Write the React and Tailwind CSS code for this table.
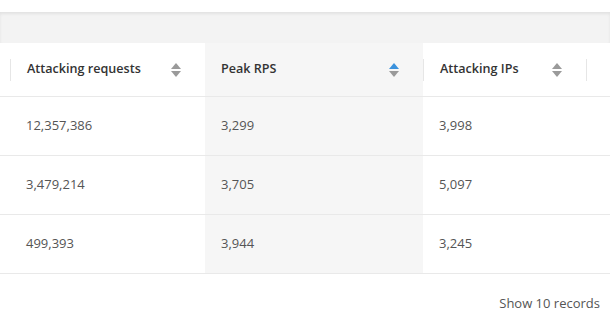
import React from 'react';

const rows = [
  { requests: '12,357,386', rps: '3,299', ips: '3,998' },
  { requests: '3,479,214', rps: '3,705', ips: '5,097' },
  { requests: '499,393', rps: '3,944', ips: '3,245' },
];

const SortIcon = ({ active }) => (
  <svg width="10" height="14" viewBox="0 0 10 14" className="shrink-0">
    <polygon points="5,0 10,6 0,6" fill={active ? '#3b92dd' : '#9a9a9a'} />
    <polygon points="0,8 10,8 5,14" fill="#9a9a9a" />
  </svg>
);

const HeaderCell = ({ label, width, active, divider = true }) => (
  <div className={`${width} h-full flex items-center ${active ? 'bg-[#f6f6f6]' : ''}`}>
    <div className={`flex items-center justify-between w-full h-[22px] pl-4 pr-6 ${divider ? 'border-l border-[#e6e6e6]' : ''}`}>
      <span className="font-semibold text-[12.6px] text-[#333]">{label}</span>
      <SortIcon active={active} />
    </div>
  </div>
);

const App = () => {
  return (
    <div className="w-[610px] h-[332px] bg-white overflow-hidden font-['Open_Sans',sans-serif]">
      <div className="h-3" />
      <div className="h-[31px] bg-[#f3f3f3] shadow-[inset_0_2px_3px_rgba(0,0,0,0.07)]" />

      <div className="flex h-[54px] border-b border-[#e9e9e9]">
        <div className="w-[10px]" />
        <HeaderCell label="Attacking requests" width="w-[195px]" />
        <HeaderCell label="Peak RPS" width="w-[218px]" active divider={false} />
        <HeaderCell label="Attacking IPs" width="w-[163px]" />
        <div className="flex-1 h-full flex items-center">
          <div className="h-[22px] border-l border-[#e6e6e6]" />
        </div>
      </div>

      {rows.map((r, i) => (
        <div key={i} className="flex h-[59px] border-b border-[#e9e9e9] text-[13px] text-[#555]">
          <div className="w-[10px]" />
          <div className="w-[195px] flex items-center pl-4">{r.requests}</div>
          <div className="w-[218px] flex items-center pl-4 bg-[#f6f6f6]">{r.rps}</div>
          <div className="w-[163px] flex items-center pl-4">{r.ips}</div>
          <div className="flex-1" />
        </div>
      ))}

      <div className="flex justify-end pr-[10px] pt-[20px] text-[13px] text-[#555]">
        Show 10 records
      </div>
    </div>
  );
};

export default App;
